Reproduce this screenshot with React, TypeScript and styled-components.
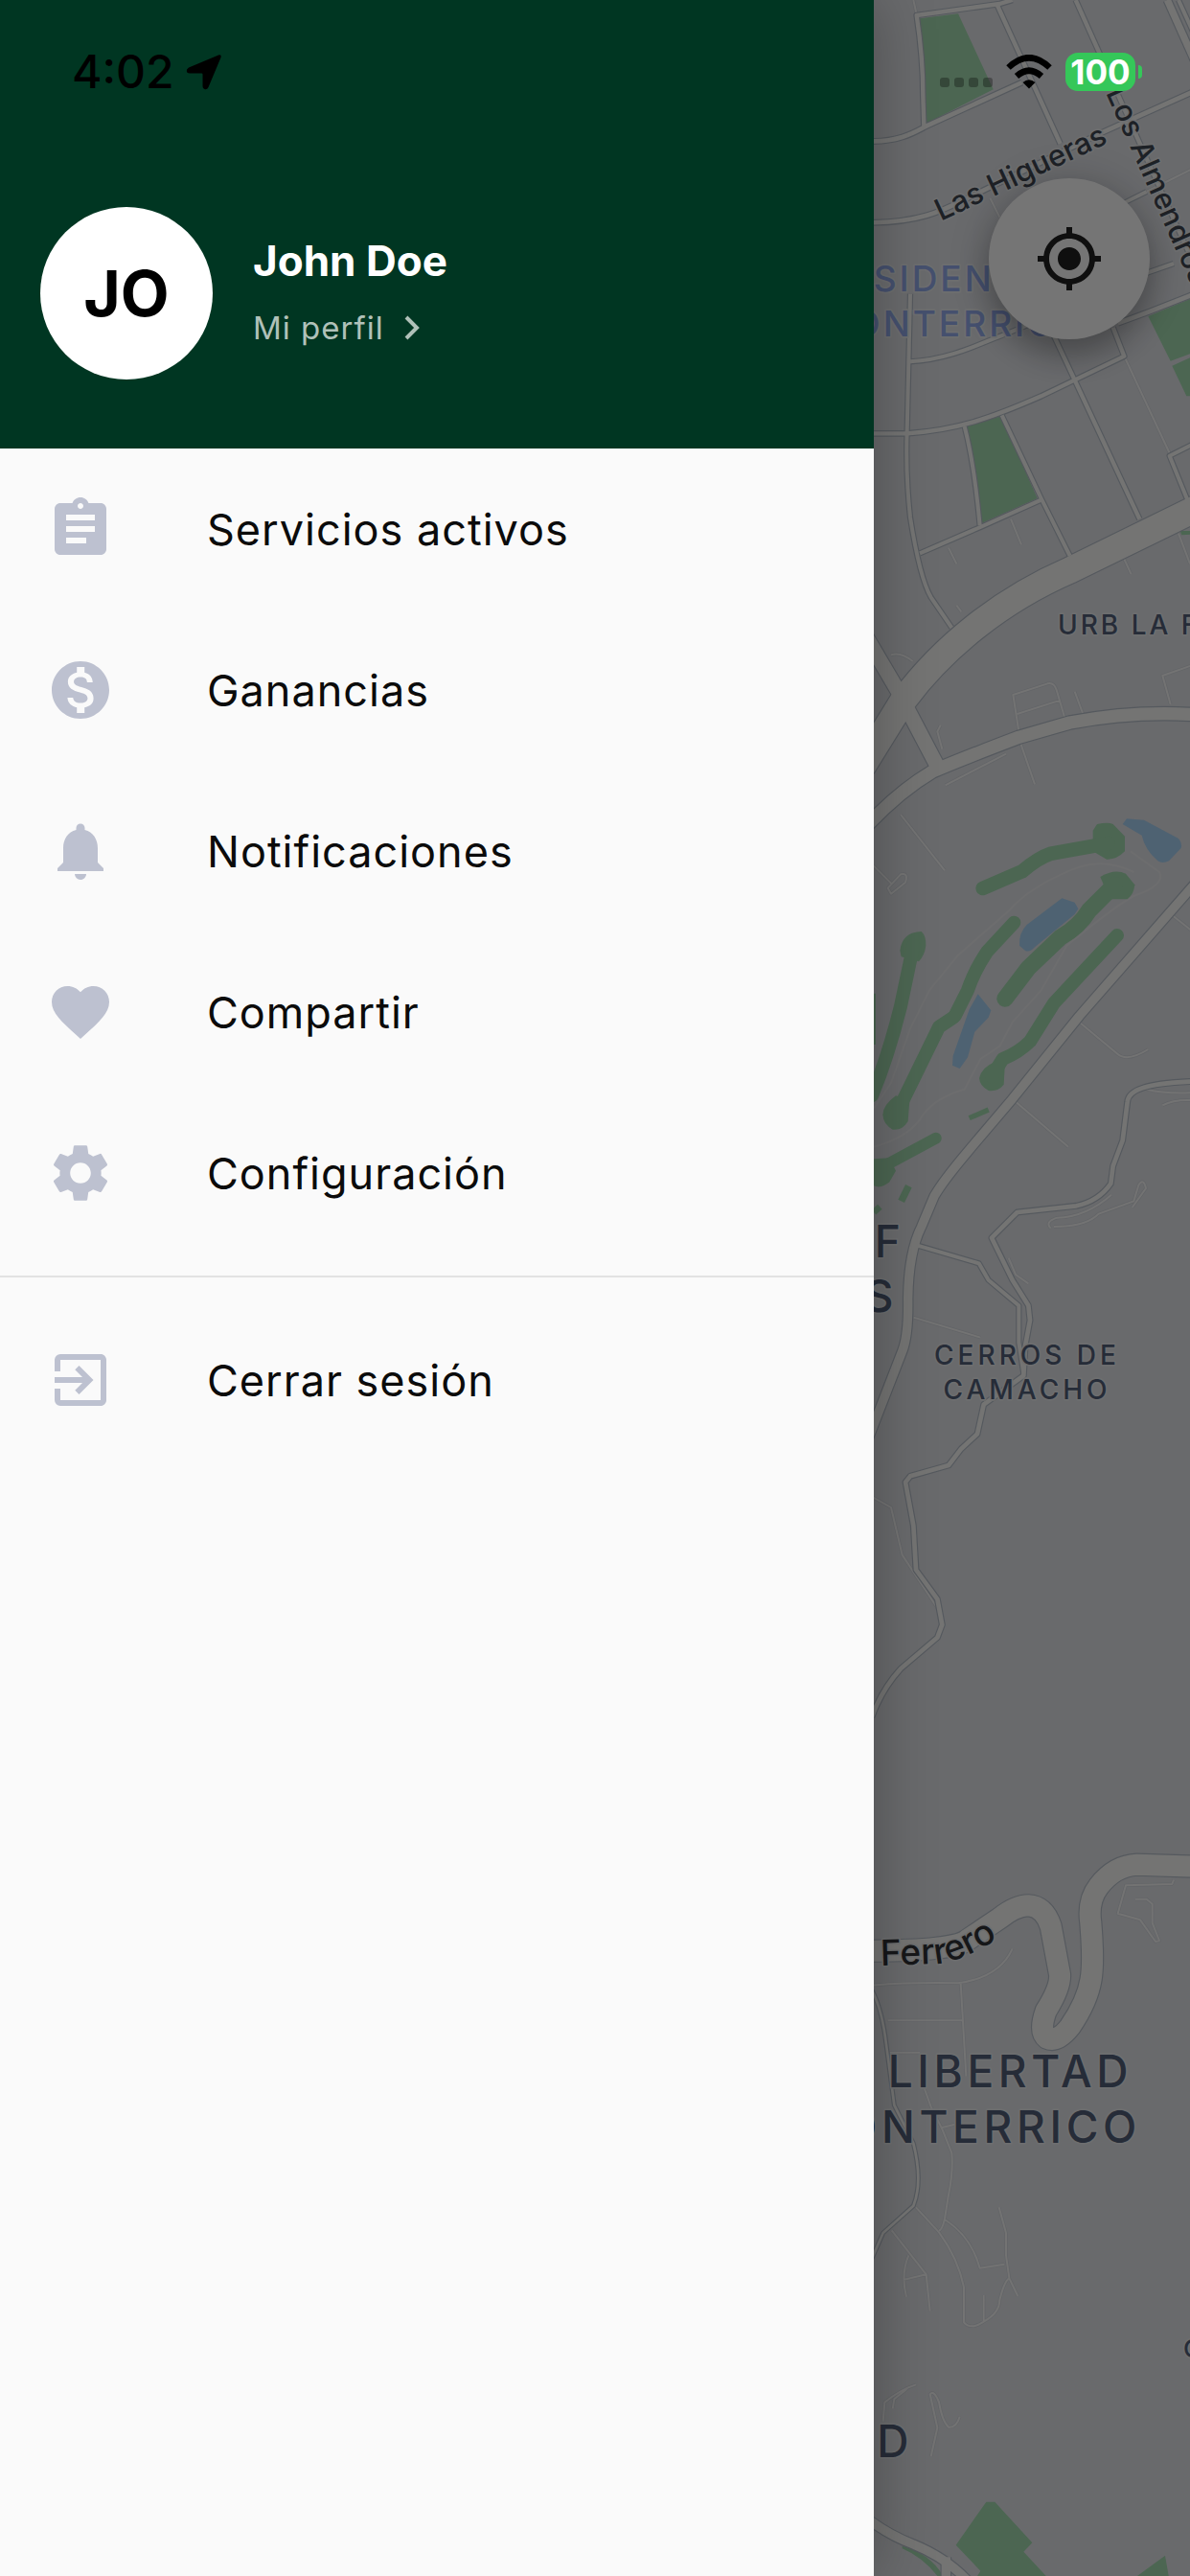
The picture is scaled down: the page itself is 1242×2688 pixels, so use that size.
import React from "react";
import styled, { createGlobalStyle } from "styled-components";
import { IconType } from "react-icons";
import {
  MdAssignment,
  MdExitToApp,
  MdFavorite,
  MdMonetizationOn,
  MdMyLocation,
  MdNotifications,
  MdSettings,
} from "react-icons/md";

const GlobalStyle = createGlobalStyle`
  * {
    box-sizing: border-box;
  }
  body {
    margin: 0;
    font-family: Inter, "Liberation Sans", sans-serif;
  }
`;

const Screen = styled.div`
  position: relative;
  display: flex;
  min-height: 100vh;
  overflow: hidden;
`;

/* Status bar */

const StatusBar = styled.div`
  position: absolute;
  z-index: 3;
  top: 0;
  left: 0;
  right: 0;
  height: 150px;
  padding: 0 50px 0 75px;
  display: flex;
  align-items: center;
  justify-content: space-between;
`;

const StatusGroup = styled.div<{ gap: number }>`
  display: flex;
  align-items: center;
  gap: ${(props) => props.gap}px;
`;

const Clock = styled.time`
  font-size: 48px;
  line-height: 60px;
  font-weight: 500;
  color: #000;
`;

const SignalDots = styled.div`
  display: flex;
  gap: 5px;
  padding-top: 22px;
`;

const SignalDot = styled.span`
  width: 10px;
  height: 10px;
  border-radius: 3px;
  background-color: rgba(0, 0, 0, 0.3);
`;

const Battery = styled.div`
  display: flex;
  align-items: center;
  gap: 3px;
`;

const BatteryLevel = styled.span`
  width: 73px;
  height: 40px;
  border-radius: 13px;
  background-color: #35c759;
  color: #fff;
  font-size: 35px;
  line-height: 40px;
  font-weight: 700;
  text-align: center;
`;

const BatteryTip = styled.span`
  width: 4px;
  height: 14px;
  border-radius: 0 4px 4px 0;
  background-color: #35c759;
`;

/* Drawer */

const Drawer = styled.aside`
  position: relative;
  z-index: 2;
  flex: 0 1 912px;
  background-color: #fafafa;
  box-shadow: 0 0 60px rgba(0, 0, 0, 0.28);
`;

const DrawerHeader = styled.header`
  height: 468px;
  padding: 216px 42px 0;
  display: flex;
  align-items: flex-start;
  gap: 42px;
  background-color: #003622;
`;

const Avatar = styled.div`
  width: 180px;
  height: 180px;
  border-radius: 50%;
  display: flex;
  align-items: center;
  justify-content: center;
  background-color: #fff;
  color: #000;
  font-size: 66px;
  font-weight: 700;
`;

const Profile = styled.div`
  padding-top: 28px;
  display: flex;
  flex-direction: column;
  gap: 16px;
`;

const ProfileName = styled.h1`
  margin: 0;
  font-size: 44px;
  line-height: 56px;
  font-weight: 700;
  color: #fff;
`;

const ProfileLink = styled.a`
  display: flex;
  align-items: center;
  gap: 20px;
  font-size: 33px;
  line-height: 52px;
  letter-spacing: 1px;
  color: #b0c1b9;
  text-decoration: none;
`;

const MenuList = styled.ul`
  margin: 0;
  padding: 0;
  list-style-type: none;
`;

const MenuLink = styled.a`
  height: 168px;
  padding: 0 48px;
  display: flex;
  align-items: center;
  gap: 96px;
  font-size: 45px;
  letter-spacing: 1px;
  color: #0b0b0b;
  text-decoration: none;
  svg {
    width: 72px;
    height: 72px;
    color: #bdc1d0;
  }
`;

const Divider = styled.hr`
  margin: 23px 0;
  border: 0;
  height: 2px;
  background-color: #e2e2e2;
`;

/* Map */

const MapPane = styled.main`
  position: relative;
  flex: 1;
  padding: 186px 42px 0 0;
  display: flex;
  justify-content: flex-end;
  align-items: flex-start;
  background-color: #e4e6eb;
`;

const MapDrawing = styled.svg`
  position: absolute;
  top: 0;
  left: 0;
  width: 100%;
  height: 100%;
`;

const MapLabel = styled.text<{ size: number; tone: string; spacing?: number }>`
  font-size: ${(props) => props.size}px;
  font-weight: 500;
  letter-spacing: ${(props) => props.spacing || 0}px;
  fill: ${(props) => props.tone};
  stroke: #eef0f2;
  stroke-width: 10px;
  stroke-linejoin: round;
  paint-order: stroke;
`;

const LocateButton = styled.button`
  position: relative;
  width: 168px;
  height: 168px;
  flex: none;
  padding: 0;
  border: none;
  border-radius: 50%;
  display: flex;
  align-items: center;
  justify-content: center;
  background-color: #fff;
  color: #212121;
  box-shadow: 0 18px 30px rgba(0, 0, 0, 0.22), 0 3px 44px rgba(0, 0, 0, 0.18);
  cursor: pointer;
`;

const Scrim = styled.div`
  position: absolute;
  inset: 0;
  background-color: rgba(0, 0, 0, 0.54);
`;

const PARK = "#a5deb2";
const WATER = "#aad5f8";
const ROAD = "#fdfdfb";
const CASING = "#b9c2cd";
const PLACE = "#53607a";
const STREET = "#414853";
const DISTRICT = "#96aef0";

interface IRoad {
  d: string;
  w: number;
}

const roads: IRoad[] = [
  { w: 13, d: "M470 0L430 12L170 48Q190 180 190 300L193 395" },
  { w: 13, d: "M422 15L620 450M590 1030L665 1190L868 1625" },
  { w: 13, d: "M668 0L1026 800" },
  { w: 22, d: "M955 0L1040 190" },
  { w: 12, d: "M990 0L1040 110" },
  { w: 14, d: "M20 442C120 445 170 410 200 395L500 258" },
  { w: 14, d: "M20 697C180 697 250 660 330 620L750 415L1040 285" },
  { w: 11, d: "M820 635L890 600" },
  { w: 12, d: "M880 858L975 825" },
  { w: 14, d: "M800 1012L900 975L1040 920" },
  { w: 12, d: "M150 1132C280 1125 380 1070 450 1045L560 1000" },
  { w: 12, d: "M150 920L140 1350Q135 1480 150 1620Q180 1810 215 1870L280 1965" },
  { w: 13, d: "M20 1357H140C300 1345 400 1310 560 1240L820 1115L785 1025" },
  { w: 12, d: "M1040 1388L962 1427L1020 1570" },
  { w: 12, d: "M320 1335Q350 1450 368 1645M437 1300L560 1560L650 1740" },
  { w: 12, d: "M180 1732L370 1650L560 1565" },
  { w: 82, d: "M1100 1565L650 1785C430 1880 250 2030 130 2190L0 2400" },
  { w: 46, d: "M10 1990L110 2160L242 2412" },
  { w: 40, d: "M1040 2237Q850 2225 650 2262L490 2308Q300 2380 220 2415Q110 2480 0 2600" },
  {
    w: 28,
    d: "M1060 2745L680 3180L470 3440L330 3605Q250 3700 225 3745L185 3840Q145 3920 143 4064Q145 4180 125 4230L20 4500",
  },
  {
    w: 14,
    d: "M1040 3385Q920 3390 880 3405Q832 3420 830 3450L815 3570L785 3650L778 3705Q740 3760 670 3775L485 3795L405 3875L470 4007L520 4087L525 4133L510 4214L505 4306L380 4397L360 4489L310 4535L270 4587L150 4621L135 4640L160 4776L168 4914L235 5006L250 5086L235 5126L120 5224Q60 5290 30 5375",
  },
  { w: 12, d: "M170 3898L365 3955L395 4007L490 4087V4202L505 4300" },
  {
    w: 66,
    d: "M1100 5845L860 5837Q790 5840 740 5905Q705 5950 715 6020Q725 6140 716 6195Q705 6265 650 6345Q610 6395 578 6380Q552 6360 575 6295Q622 6220 618 6180L590 6030Q570 5968 520 5965Q480 5965 430 6005L330 6072Q290 6107 20 6107",
  },
  { w: 8, d: "M30 6230Q62 6290 75 6400L100 6590L160 6710Q190 6830 160 6905L65 6990L30 7070" },
  { w: 28, d: "M10 7880Q80 7935 160 7965Q270 8010 340 8090M262 8005V8080" },
];

const lanes =
  "M160 0L170 45M400 620L430 680M890 600L1040 525M820 1115L965 1425" +
  "M270 1715L295 1765M465 1625L498 1705M820 1750L842 1798M295 1895L310 1915M90 2050Q120 2040 158 2070M990 1670L1026 1765" +
  "M490 2290L472 2175L580 2140Q600 2135 608 2160L633 2245M485 2235L620 2192M665 2165L692 2238M495 2325L540 2455M245 2270L235 2290L250 2345M260 2458L450 2360M1040 2080L940 2115L965 2205" +
  "M120 2550L258 2725M30 2705L90 2765M80 2780L120 2737Q145 2730 135 2762L90 2798Z" +
  "M970 2865L1040 2920M680 3200L800 3300Q830 3325 895 3285M475 3445L645 3590M890 3410Q950 3425 1040 3420M940 3460Q980 3440 1040 3445" +
  "M590 3845Q570 3825 610 3812Q700 3810 780 3740M600 3840Q700 3840 740 3800L850 3760L865 3710Q880 3685 888 3720L845 3780" +
  "M160 4124L370 4187M30 4685L90 4719L125 4868L235 5034M458 3938L480 3990L520 4018" +
  "M30 6215Q150 6205 300 6208Q430 6190 470 6100M308 6208L325 6500M80 6325H312M85 6425H180M195 6540L215 6595L250 6665L280 6740Q285 6800 270 6870L258 6945Q250 6982 240 6982M250 6660L290 6650" +
  "M975 5885L970 5898L825 5902L800 5990L870 6010L918 6078L930 6075L908 6020V5960L890 5945H855" +
  "M168 6910L240 6988Q300 7070 318 7160V7270Q340 7295 380 7268Q430 7240 430 7200Q445 7140 460 7132L450 7060V6990L428 6910M460 7132L487 7188M380 7268V7185M258 6948Q340 7000 368 7100L445 7088" +
  "M92 6982L200 7120L212 7235M145 7060Q120 7120 138 7190M128 7137L200 7120M168 7465Q120 7480 70 7520L65 7580M95 7540L100 7510L140 7478M215 7690L235 7600L212 7495Q225 7480 240 7520Q250 7580 270 7598Q295 7600 305 7565";

const golfPaths =
  "M36 3590Q150 3560 190 3490Q230 3435 320 3410L370 3315L430 3275L470 3200L560 3100L640 2960Q800 2830 850 2805Q950 2770 930 2730L840 2665" +
  "M850 2730Q750 2680 650 2725Q520 2780 460 2850L300 2990L210 3100L150 3220L90 3390L36 3470";

const parks = [
  "M180 58L300 43L410 280L200 387Z",
  "M895 990L1040 930V1103L965 1130Z",
  "M970 1145L1040 1113V1240H1015Z",
  "M325 1330L435 1303L548 1560L375 1637Z",
  "M995 1662H1040V1672L1000 1675Z",
  "M722 2600L735 2580Q770 2573 785 2580L822 2618V2665Q795 2692 765 2690L722 2665Z",
  "M745 2745Q790 2718 825 2735L853 2770Q850 2800 830 2815H775Z",
  "M118 2975Q125 2918 185 2916Q200 2930 199 2960Q195 2990 177 3010L122 2995Z",
  "M64 3490Q64 3460 105 3430L148 3445L143 3510Q125 3540 95 3536Q66 3520 64 3490Z",
  "M366 3375Q375 3340 415 3325L446 3340L443 3395Q425 3418 395 3414Q368 3400 366 3375Z",
  "M36 3628L85 3625L105 3665L85 3700Q60 3722 36 3712Z",
  "M388 7832H415L532 7960L505 7988L590 8080H350L370 8048L293 7967Z",
  "M850 8072L948 8000L962 8080Z",
  "M125 7970Q210 7990 258 8070H240Q190 8005 125 7978Z",
];

const fairways: IRoad[] = [
  { w: 44, d: "M377 2781L500 2728Q550 2685 590 2672L770 2640" },
  { w: 42, d: "M475 2888L390 2980Q350 3040 330 3100L290 3180" },
  { w: 42, d: "M285 3185L240 3215L125 3450L105 3490" },
  { w: 42, d: "M160 2960L120 3150Q80 3310 30 3430" },
  { w: 52, d: "M447 3126L520 3030L620 2935Q680 2900 710 2850L790 2770" },
  { w: 42, d: "M798 2928L600 3140L525 3260Q490 3295 440 3315L405 3370" },
  { w: 36, d: "M230 3563L60 3655" },
];

const strips: IRoad[] = [
  { w: 16, d: "M335 3500L395 3474" },
  { w: 22, d: "M145 3713L122 3760" },
  { w: 20, d: "M36 3795L55 3778" },
  { w: 8, d: "M38 3110V3270" },
];

const lakes = [
  "M815 2580L828 2563L882 2567L990 2625Q1002 2640 998 2655L960 2695Q940 2705 925 2695Q885 2660 875 2615Z",
  "M625 2812L665 2825L676 2845L665 2862L540 2965Q525 2982 510 2976L492 2960Q490 2920 515 2895Z",
  "M362 3112L403 3163L395 3185L352 3230L330 3310L305 3345L282 3335L284 3305L335 3160Z",
];

const CityMap: React.FC = (): JSX.Element => (
  <MapDrawing
    viewBox="36 0 990 8064"
    preserveAspectRatio="xMinYMin slice"
    fill="none"
    strokeLinejoin="round"
  >
    <path d={golfPaths} stroke="#edeef0" strokeWidth={6} />
    {parks.map((d) => (
      <path key={d} d={d} fill={PARK} />
    ))}
    {fairways.map((f) => (
      <path
        key={f.d}
        d={f.d}
        stroke={PARK}
        strokeWidth={f.w}
        strokeLinecap="round"
      />
    ))}
    {strips.map((s) => (
      <path key={s.d} d={s.d} stroke={PARK} strokeWidth={s.w} />
    ))}
    {lakes.map((d) => (
      <path key={d} d={d} fill={WATER} />
    ))}
    <path d={lanes} stroke="#d5d9df" strokeWidth={10} />
    <path d={lanes} stroke="#fafafa" strokeWidth={6} />
    {roads.map((r) => (
      <path key={r.d} d={r.d} stroke={CASING} strokeWidth={r.w + 7} />
    ))}
    {roads.map((r) => (
      <path key={r.d} d={r.d} stroke={ROAD} strokeWidth={r.w} />
    ))}

    <MapLabel size={93} tone={STREET} transform="translate(246 692) rotate(-25)">
      Las Higueras
    </MapLabel>
    <MapLabel size={93} tone={STREET} transform="translate(762 290) rotate(66)">
      Los Almendros
    </MapLabel>
    <MapLabel size={111} tone={DISTRICT} spacing={9} x={35} y={912}>
      SIDEN
    </MapLabel>
    <MapLabel size={111} tone={DISTRICT} spacing={9} x={-29} y={1053}>
      ONTERRIC
    </MapLabel>
    <MapLabel size={84} tone={PLACE} spacing={9} x={612} y={1985}>
      URB LA F
    </MapLabel>
    <MapLabel size={138} tone={PLACE} spacing={9} x={38} y={3935}>
      F
    </MapLabel>
    <MapLabel size={138} tone={PLACE} spacing={9} x={8} y={4107}>
      S
    </MapLabel>
    <MapLabel
      size={84}
      tone={PLACE}
      spacing={12}
      x={516}
      y={4271}
      textAnchor="middle"
    >
      CERROS DE
    </MapLabel>
    <MapLabel
      size={84}
      tone={PLACE}
      spacing={12}
      x={516}
      y={4379}
      textAnchor="middle"
    >
      CAMACHO
    </MapLabel>
    <path id="ferrero" d="M58 6153L240 6147Q330 6138 480 6030" />
    <MapLabel size={111} tone="#303338">
      <textPath href="#ferrero">Ferrero</textPath>
    </MapLabel>
    <MapLabel size={138} tone={PLACE} spacing={14} x={80} y={6533}>
      LIBERTAD
    </MapLabel>
    <MapLabel size={138} tone={PLACE} spacing={14} x={-60} y={6707}>
      ONTERRICO
    </MapLabel>
    <MapLabel size={138} tone={PLACE} x={46} y={7692}>
      D
    </MapLabel>
    <MapLabel size={78} tone={PLACE} x={1005} y={7380}>
      C
    </MapLabel>
  </MapDrawing>
);

interface IMenuItem {
  label: string;
  icon: IconType;
}

const menuItems: IMenuItem[] = [
  { label: "Servicios activos", icon: MdAssignment },
  { label: "Ganancias", icon: MdMonetizationOn },
  { label: "Notificaciones", icon: MdNotifications },
  { label: "Compartir", icon: MdFavorite },
  { label: "Configuración", icon: MdSettings },
];

const App: React.FC = (): JSX.Element => {
  return (
    <Screen>
      <GlobalStyle />
      <StatusBar>
        <StatusGroup gap={12}>
          <Clock>4:02</Clock>
          <svg width="38" height="38" viewBox="0 0 38 38">
            <path
              d="M34 1.5Q37.500 .5 36.500 4L23.500 35Q22 38 19.500 37Q17.500 36.500 17.500 34V21.500Q17.500 20.500 16.500 20.500H4Q1 20.500 .8 18Q.5 16 3 14.500Z"
              fill="#000"
            />
          </svg>
        </StatusGroup>
        <StatusGroup gap={14}>
          <SignalDots>
            <SignalDot />
            <SignalDot />
            <SignalDot />
            <SignalDot />
          </SignalDots>
          <svg width="48" height="36" viewBox="0 0 48 36">
            <path
              d="M2.500 13.500Q24 -7 45.500 13.500"
              fill="none"
              stroke="#000"
              strokeWidth="6.500"
            />
            <path
              d="M11 22.500Q24 11 37 22.500"
              fill="none"
              stroke="#000"
              strokeWidth="6.500"
            />
            <path d="M17.500 29Q24 23.500 30.500 29L24 35.500Z" fill="#000" />
          </svg>
          <Battery>
            <BatteryLevel>100</BatteryLevel>
            <BatteryTip />
          </Battery>
        </StatusGroup>
      </StatusBar>

      <Drawer>
        <DrawerHeader>
          <Avatar>JO</Avatar>
          <Profile>
            <ProfileName>John Doe</ProfileName>
            <ProfileLink href="#perfil">
              Mi perfil
              <svg width="18" height="26" viewBox="0 0 18 26">
                <path
                  d="M3 2L14 13L3 24"
                  fill="none"
                  stroke="currentColor"
                  strokeWidth="4"
                />
              </svg>
            </ProfileLink>
          </Profile>
        </DrawerHeader>
        <nav>
          <MenuList>
            {menuItems.map(({ label, icon: Icon }) => (
              <li key={label}>
                <MenuLink href="#">
                  <Icon />
                  {label}
                </MenuLink>
              </li>
            ))}
          </MenuList>
          <Divider />
          <MenuLink href="#">
            <MdExitToApp />
            Cerrar sesión
          </MenuLink>
        </nav>
      </Drawer>

      <MapPane>
        <CityMap />
        <LocateButton type="button" aria-label="Mi ubicación">
          <MdMyLocation size={72} />
        </LocateButton>
        <Scrim />
      </MapPane>
    </Screen>
  );
};

export default App;
